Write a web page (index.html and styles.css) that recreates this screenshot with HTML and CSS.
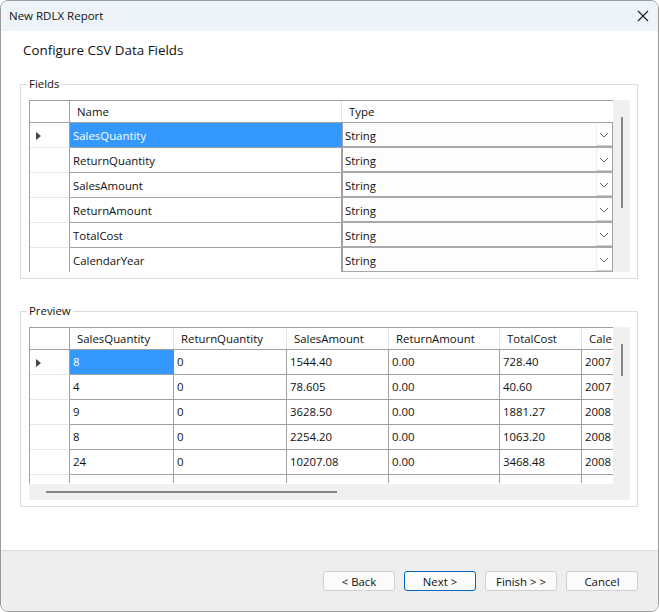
FILE: index.html
```html
<!DOCTYPE html>
<html lang="en">
<head>
<meta charset="utf-8">
<title>New RDLX Report</title>
<link rel="stylesheet" href="styles.css">
</head>
<body>
<div class="window">
  <header class="titlebar">
    <span class="title">New RDLX Report</span>
    <svg class="close" width="12" height="12" viewBox="0 0 12 12"><path d="M1 1L11 11M11 1L1 11" stroke="#1a1a1a" stroke-width="1.1" fill="none"/></svg>
  </header>
  <main class="content">
    <h1 class="heading">Configure CSV Data Fields</h1>
    <fieldset class="group group-fields">
      <legend class="legend">Fields</legend>
      <div class="gridwrap">
        <div class="grid fields-grid">
          <div class="row head"><div class="rh"></div><div class="c hc">Name</div><div class="c hc last">Type</div></div>
          <div class="row"><div class="rh"><span class="arrow"></span></div><div class="c sel">SalesQuantity</div><div class="combo"><span class="cv">String</span><span class="cb"><svg width="10" height="6" viewBox="0 0 10 6"><path d="M1 1L5 5L9 1" stroke="#666" fill="none"/></svg></span></div></div>
          <div class="row"><div class="rh"></div><div class="c">ReturnQuantity</div><div class="combo"><span class="cv">String</span><span class="cb"><svg width="10" height="6" viewBox="0 0 10 6"><path d="M1 1L5 5L9 1" stroke="#666" fill="none"/></svg></span></div></div>
          <div class="row"><div class="rh"></div><div class="c">SalesAmount</div><div class="combo"><span class="cv">String</span><span class="cb"><svg width="10" height="6" viewBox="0 0 10 6"><path d="M1 1L5 5L9 1" stroke="#666" fill="none"/></svg></span></div></div>
          <div class="row"><div class="rh"></div><div class="c">ReturnAmount</div><div class="combo"><span class="cv">String</span><span class="cb"><svg width="10" height="6" viewBox="0 0 10 6"><path d="M1 1L5 5L9 1" stroke="#666" fill="none"/></svg></span></div></div>
          <div class="row"><div class="rh"></div><div class="c">TotalCost</div><div class="combo"><span class="cv">String</span><span class="cb"><svg width="10" height="6" viewBox="0 0 10 6"><path d="M1 1L5 5L9 1" stroke="#666" fill="none"/></svg></span></div></div>
          <div class="row"><div class="rh"></div><div class="c">CalendarYear</div><div class="combo"><span class="cv">String</span><span class="cb"><svg width="10" height="6" viewBox="0 0 10 6"><path d="M1 1L5 5L9 1" stroke="#666" fill="none"/></svg></span></div></div>
        </div>
        <div class="vscroll"><span class="vthumb vthumb-fields"></span></div>
      </div>
    </fieldset>
    <fieldset class="group group-preview">
      <legend class="legend">Preview</legend>
      <div class="gridwrap">
        <div class="grid preview-grid">
          <div class="row head"><div class="rh"></div><div class="c hc">SalesQuantity</div><div class="c hc">ReturnQuantity</div><div class="c hc">SalesAmount</div><div class="c hc">ReturnAmount</div><div class="c hc">TotalCost</div><div class="c hc last">Cale</div></div>
          <div class="row"><div class="rh"><span class="arrow"></span></div><div class="c sel">8</div><div class="c">0</div><div class="c">1544.40</div><div class="c">0.00</div><div class="c">728.40</div><div class="c last">2007</div></div>
          <div class="row"><div class="rh"></div><div class="c">4</div><div class="c">0</div><div class="c">78.605</div><div class="c">0.00</div><div class="c">40.60</div><div class="c last">2007</div></div>
          <div class="row"><div class="rh"></div><div class="c">9</div><div class="c">0</div><div class="c">3628.50</div><div class="c">0.00</div><div class="c">1881.27</div><div class="c last">2008</div></div>
          <div class="row"><div class="rh"></div><div class="c">8</div><div class="c">0</div><div class="c">2254.20</div><div class="c">0.00</div><div class="c">1063.20</div><div class="c last">2008</div></div>
          <div class="row"><div class="rh"></div><div class="c">24</div><div class="c">0</div><div class="c">10207.08</div><div class="c">0.00</div><div class="c">3468.48</div><div class="c last">2008</div></div>
          <div class="row"><div class="rh"></div><div class="c"></div><div class="c"></div><div class="c"></div><div class="c"></div><div class="c"></div><div class="c last"></div></div>
        </div>
        <div class="vscroll"><span class="vthumb vthumb-preview"></span></div>
        <div class="hscroll"><span class="hthumb"></span></div>
      </div>
    </fieldset>
  </main>
  <footer class="footer">
    <button class="btn">&lt; Back</button>
    <button class="btn primary">Next &gt;</button>
    <button class="btn">Finish &gt; &gt;</button>
    <button class="btn">Cancel</button>
  </footer>
</div>
</body>
</html>
```
FILE: styles.css
```css
* { box-sizing: border-box; }
html, body { margin: 0; height: 100%; background: #fff; }
body { font-family: "Open Sans", "Noto Sans", sans-serif; font-size: 11.4px; color: #111; }
.window { width: 659px; height: 612px; border: 1px solid #9a9a9a; border-radius: 8px; overflow: hidden; display: flex; flex-direction: column; background: #fff; }
.titlebar { height: 30px; flex: none; background: #ecf4fa; display: flex; align-items: center; justify-content: space-between; padding: 0 9px 2px 8px; }
.title { font-size: 11.5px; }
.close { display: block; margin-top: 1px; }
.content { flex: 1; padding: 0 20px 0 19px; min-height: 0; }
.heading { margin: 9px 0 0 3px; height: 20px; font-size: 13.4px; font-weight: 400; line-height: 20px; }
.group { margin: 16px 0 0; padding: 8px 8px 6px 8px; border: 1px solid #dcdcdc; min-width: 0; }
.group-fields { height: 203px; }
.group-preview { height: 204px; margin-top: 24px; }
.legend { padding: 0 2px; margin-left: -2px; line-height: 16px; height: 16px; }
.gridwrap { display: grid; grid-template-columns: 584px 17px; width: 601px; }
.grid { overflow: hidden; border-top: 1px solid #a0a0a0; border-left: 1px solid #a0a0a0; background: #fff; }
.fields-grid { height: 172px; }
.preview-grid { height: 157px; border-bottom: 1px solid #fff; }
.row { display: grid; height: 25px; border-bottom: 1px solid #a0a0a0; }
.row.head { height: 22px; }
.fields-grid .row { grid-template-columns: 40px 272px 271px; }
.preview-grid .row { grid-template-columns: 40px 104px 113px 102px 111px 82px 32px; }
.rh { border-right: 1px solid #a0a0a0; display: flex; align-items: center; padding: 2px 0 0 6px; margin-bottom: -1px; background: #fff; border-bottom: 1px solid #e8e8e8; position: relative; z-index: 1; }
.head .rh { border-bottom-color: #a0a0a0; }
.arrow { width: 0; height: 0; border-left: 5px solid #444; border-top: 4px solid transparent; border-bottom: 4px solid transparent; }
.c { border-right: 1px solid #a0a0a0; padding-left: 3px; line-height: 24px; white-space: nowrap; overflow: hidden; }
.fields-grid .c { line-height: 26px; }
.fields-grid .hc, .hc { padding-left: 7px; line-height: 21px; border-right-color: #e4e4e4; }
.c.last { border-right: none; }
.sel { background: #3399ff; color: #fff; border-right-color: #3399ff; }
.combo { display: flex; height: 25px; margin-bottom: -1px; border-left: 1px solid #a0a0a0; border-right: 1px solid #a0a0a0; border-bottom: 2px solid #a8a8a8; background: #fdfdfd; align-items: stretch; position: relative; }
.cv { flex: 1; padding-left: 2px; line-height: 26px; }
.cb { width: 16px; padding: 2px 2px 0 0; background: #fff; display: flex; align-items: center; justify-content: center; border-left: 1px solid #ededed; border-bottom: 1px solid #cfcfcf; }
.vscroll { background: #f0f0f0; position: relative; }
.vthumb { position: absolute; left: 8px; width: 2px; background: #858585; }
.vthumb-fields { top: 17px; height: 91px; }
.vthumb-preview { top: 17px; height: 32px; }
.hscroll { grid-column: 1 / span 2; height: 16px; background: #f0f0f0; position: relative; }
.hthumb { position: absolute; left: 17px; top: 7px; height: 2px; width: 291px; background: #858585; }
.footer { height: 61px; flex: none; background: #eeeeee; border-top: 1px solid #dedede; display: flex; justify-content: flex-end; align-items: flex-start; gap: 9px; padding: 20px 20px 0 0; }
.btn { width: 72px; height: 20px; padding: 0; font: inherit; color: #111; background: #fbfbfb; border: 1px solid #d0d0d0; border-radius: 3px; }
.btn.primary { border-color: #0067c0; }
```
